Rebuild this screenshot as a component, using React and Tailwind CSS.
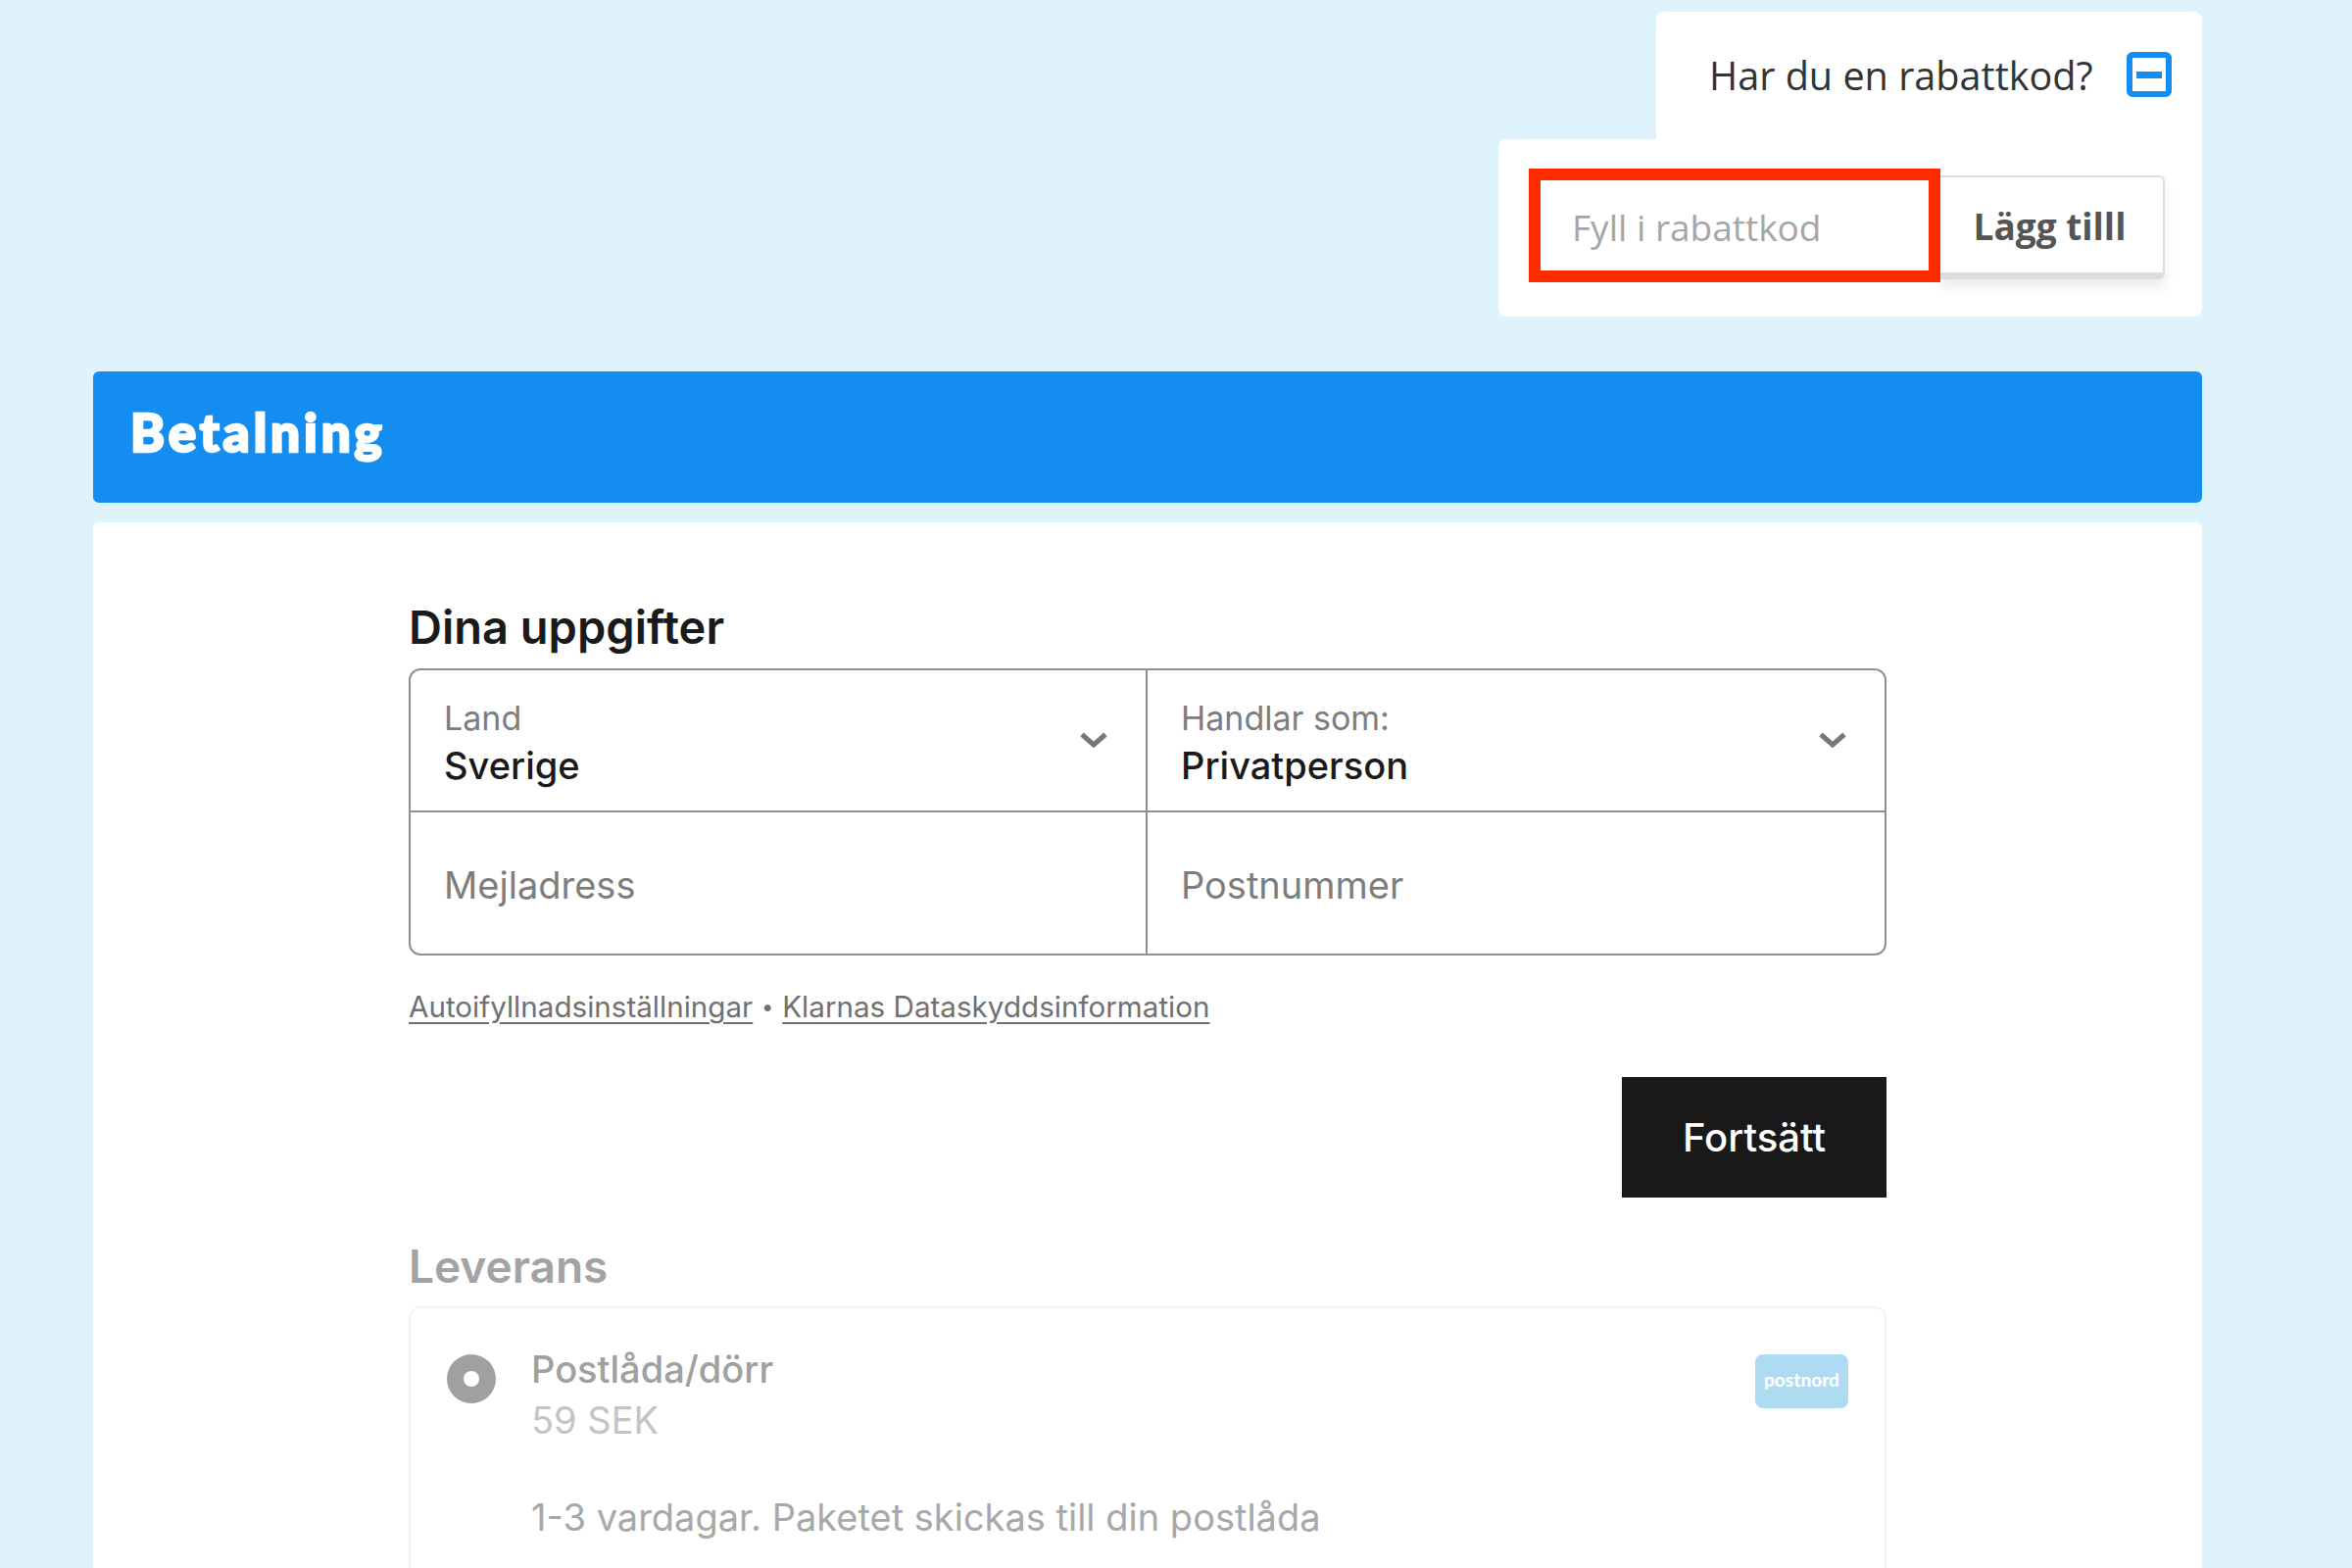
import React from 'react';

const inter = "font-['Inter',sans-serif]";
const openSans = "font-['Open_Sans',sans-serif]";

function Chevron() {
  return (
    <svg width="30" height="16" viewBox="0 0 30 16" fill="none" className="shrink-0 mt-[-4px]">
      <path d="M3 2.5 L15 13 L27 2.5" stroke="#777777" strokeWidth="5" />
    </svg>
  );
}

function SelectCell({ label, value, className }) {
  return (
    <div className={`flex items-center justify-between pl-[34px] pr-[38px] pt-[4px] ${className}`}>
      <div>
        <div className="text-[34px] leading-[48px] text-[#7d7d7d]">{label}</div>
        <div className="text-[38px] leading-[50px] font-medium text-[#1a1a1a] mt-[-1px]">{value}</div>
      </div>
      <Chevron />
    </div>
  );
}

export default function App() {
  return (
    <div className={`h-[1600px] overflow-hidden bg-[#def3fc] pt-[12px] pl-[95px] pr-[153px] antialiased ${inter}`}>
      {/* Rabattkod */}
      <div className={`flex flex-col items-end ${openSans}`}>
        <div className="w-[557px] h-[130px] bg-white rounded-t-[8px] flex items-start pl-[54px] pt-[38px]">
          <span className="text-[39.6px] leading-[54px] text-[#333333] w-[426px]">Har du en rabattkod?</span>
          <div className="w-[46px] h-[46px] mt-[3px] border-[6px] border-[#138def] rounded-[6px] flex items-center justify-center">
            <div className="w-[26px] h-[7px] bg-[#138def]"></div>
          </div>
        </div>
        <div className="w-[718px] h-[181px] bg-white rounded-b-[8px] rounded-tl-[8px] flex items-start pl-[31px] pt-[30px]">
          <div className="w-[420px] h-[116px] border-[12px] border-[#ff2a00] flex items-center pl-[32px] pt-[3px] relative z-10 bg-white">
            <span className="text-[37px] text-[#a6a6a6]">Fyll i rabattkod</span>
          </div>
          <div className="w-[229px] h-[106px] mt-[7px] bg-white border-2 border-l-0 border-[#dddddd] border-b-[7px] rounded-r-[6px] shadow-[0_8px_12px_rgba(0,0,0,0.08)] flex items-center justify-center pr-[4px] pt-[2px]">
            <span className="text-[37px] font-bold text-[#555555]">Lägg tilll</span>
          </div>
        </div>
      </div>

      {/* Betalning */}
      <div className="mt-[56px] h-[134px] bg-[#138def] rounded-[6px] flex items-center pl-[38px]">
        <h1 className="font-['Lato',sans-serif] font-black text-[53px] leading-none text-white tracking-[3.9px] [-webkit-text-stroke:2.5px_white] mt-[-11px]">
          Betalning
        </h1>
      </div>

      <div className="mt-[20px] h-[1100px] bg-white rounded-t-[6px] pl-[322px] pr-[322px] pt-[72px]">
        <h2 className="text-[47px] leading-[70px] font-semibold text-[#1a1a1a]">Dina uppgifter</h2>

        <div className="mt-[7px] h-[293px] border-2 border-[#909090] rounded-[12px] grid grid-cols-2 grid-rows-2">
          <SelectCell label="Land" value="Sverige" className="border-r-2 border-b-2 border-[#909090]" />
          <SelectCell label="Handlar som:" value="Privatperson" className="border-b-2 border-[#909090]" />
          <div className="border-r-2 border-[#909090] flex items-center pl-[34px] pt-[5px] text-[38px] text-[#7d7d7d]">Mejladress</div>
          <div className="flex items-center pl-[34px] pt-[5px] text-[38px] text-[#7d7d7d]">Postnummer</div>
        </div>

        <div className="mt-[32px] flex items-center text-[29.6px] leading-[40px] text-[#707070]">
          <span className="underline underline-offset-[5px]">Autoifyllnadsinställningar</span>
          <span className="w-[30px] text-center text-[22px]">•</span>
          <span className="underline underline-offset-[5px]">Klarnas Dataskyddsinformation</span>
        </div>

        <div className="mt-[52px] flex justify-end">
          <div className="w-[270px] h-[123px] bg-[#191919] flex items-center justify-center text-[40px] font-medium text-white">
            Fortsätt
          </div>
        </div>

        <h2 className="mt-[35px] text-[46px] leading-[70px] font-semibold text-[#a3a3a3]">Leverans</h2>

        <div className="mt-[6px] h-[400px] border-2 border-[#f3f3f3] rounded-[12px] pl-[37px] pr-[37px] pt-[47px]">
          <div className="flex items-start">
            <div className="w-[50px] h-[50px] rounded-full bg-[#a0a0a0] flex items-center justify-center shrink-0">
              <div className="w-[16px] h-[16px] rounded-full bg-white"></div>
            </div>
            <div className="ml-[36px] flex-1 mt-[-11px]">
              <div className="text-[38px] leading-[52px] font-medium text-[#a0a0a0]">Postlåda/dörr</div>
              <div className="text-[38px] leading-[52px] text-[#c4c4c4]">59 SEK</div>
            </div>
            <div className="w-[95px] h-[55px] rounded-[8px] bg-[#aedaf2] flex items-center justify-center font-['Lato',sans-serif] font-black text-[19px] text-white pb-[3px]">
              postnord
            </div>
          </div>
          <div className="mt-[47px] ml-[86px] text-[38px] leading-[52px] text-[#a8a8a8]">
            1-3 vardagar. Paketet skickas till din postlåda
          </div>
        </div>
      </div>
    </div>
  );
}
